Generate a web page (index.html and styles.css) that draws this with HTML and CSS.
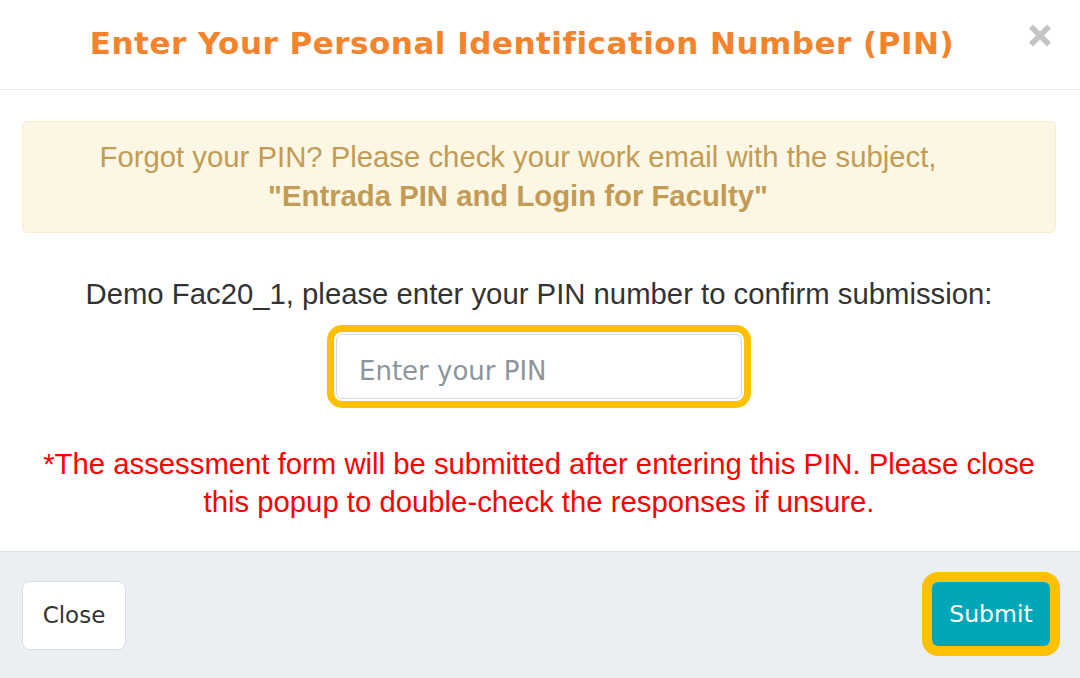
FILE: index.html
```html
<!DOCTYPE html>
<html>
<head>
<meta charset="utf-8">
<link rel="stylesheet" href="styles.css">
</head>
<body>
<div class="modal">
  <div class="modal-header">
    <h4 class="modal-title">Enter Your Personal Identification Number (PIN)</h4>
    <button class="close-x" type="button" aria-label="Close">
      <svg width="24" height="23" viewBox="0 0 24 23"><path d="M3 2.5 L21 20.5 M21 2.5 L3 20.5" stroke="#c4c4c4" stroke-width="5.5" stroke-linecap="butt"/></svg>
    </button>
  </div>
  <div class="modal-body">
    <div class="alert">
      Forgot your PIN? Please check your work email with the subject,<br>
      <strong>"Entrada PIN and Login for Faculty"</strong>
    </div>
    <p class="prompt">Demo Fac20_1, please enter your PIN number to confirm submission:</p>
    <div class="pin-wrap">
      <div class="pin-ring">
        <input class="pin-input" type="password" placeholder="Enter your PIN">
      </div>
    </div>
    <p class="warning">*The assessment form will be submitted after entering this PIN. Please close<br>this popup to double-check the responses if unsure.</p>
  </div>
  <div class="modal-footer">
    <button class="btn btn-close" type="button">Close</button>
    <div class="submit-ring">
      <button class="btn btn-submit" type="button">Submit</button>
    </div>
  </div>
</div>
</body>
</html>
```
FILE: styles.css
```css
html, body {
  margin: 0;
  padding: 0;
  background: #ffffff;
}
.modal {
  width: 1080px;
  height: 678px;
  display: flex;
  flex-direction: column;
  background: #ffffff;
  overflow: hidden;
}
.modal-header {
  height: 89px;
  border-bottom: 1px solid #e9e9e9;
  display: flex;
  align-items: center;
  padding: 0 28px 0 28px;
  box-sizing: content-box;
}
.modal-title {
  flex: 1;
  margin: 0;
  text-align: center;
  font-family: "DejaVu Sans", Verdana, sans-serif;
  font-weight: bold;
  font-size: 31px;
  letter-spacing: 0.5px;
  color: #f4832b;
  padding-bottom: 4px;
  white-space: nowrap;
}
.close-x {
  width: 36px;
  height: 40px;
  border: 0;
  background: transparent;
  padding: 0;
  display: flex;
  align-items: center;
  justify-content: flex-end;
  margin-bottom: 18px;
}
.modal-body {
  flex: 1;
  padding: 31px 24px 0 22px;
  font-family: "Liberation Sans", Arial, sans-serif;
}
.alert {
  background: #fcf7e4;
  border: 1px solid #faecce;
  border-radius: 5px;
  color: #c29b55;
  font-size: 29.3px;
  line-height: 39px;
  text-align: center;
  padding: 15px 62px 17px 20px;
}
.alert strong {
  font-weight: bold;
}
.prompt {
  margin: 42px 0 0;
  text-align: center;
  color: #333333;
  font-size: 29.3px;
  line-height: 38px;
}
.pin-wrap {
  display: flex;
  justify-content: center;
  margin-top: 12px;
}
.pin-ring {
  border: 7px solid #ffc000;
  border-radius: 15px;
  padding: 2px;
}
.pin-input {
  display: block;
  width: 406px;
  height: 65px;
  box-sizing: border-box;
  border: 1px solid #d7dadd;
  border-radius: 6px;
  padding: 8px 22px 0;
  font-family: "DejaVu Sans", Verdana, sans-serif;
  font-size: 26px;
  color: #333;
  outline: none;
}
.pin-input::placeholder {
  color: #8d959c;
}
.warning {
  margin: 37px 0 0;
  text-align: center;
  color: #ff0000;
  font-size: 29.3px;
  line-height: 38px;
}
.modal-footer {
  height: 126px;
  border-top: 1px solid #dcdfe4;
  background: #ebeef2;
  display: flex;
  align-items: center;
  justify-content: space-between;
  padding: 0 20px 0 22px;
}
.btn {
  font-family: "DejaVu Sans", Verdana, sans-serif;
  font-size: 23px;
  cursor: pointer;
}
.btn-close {
  width: 104px;
  height: 69px;
  background: #ffffff;
  border: 1px solid #dadde2;
  border-radius: 8px;
  color: #333333;
}
.submit-ring {
  border: 10px solid #ffc000;
  border-radius: 16px;
  display: flex;
  margin-bottom: 3px;
}
.btn-submit {
  width: 118px;
  height: 64px;
  background: #00a7b9;
  border: 0;
  border-radius: 6px;
  color: #ffffff;
  font-size: 23.5px;
}
```
